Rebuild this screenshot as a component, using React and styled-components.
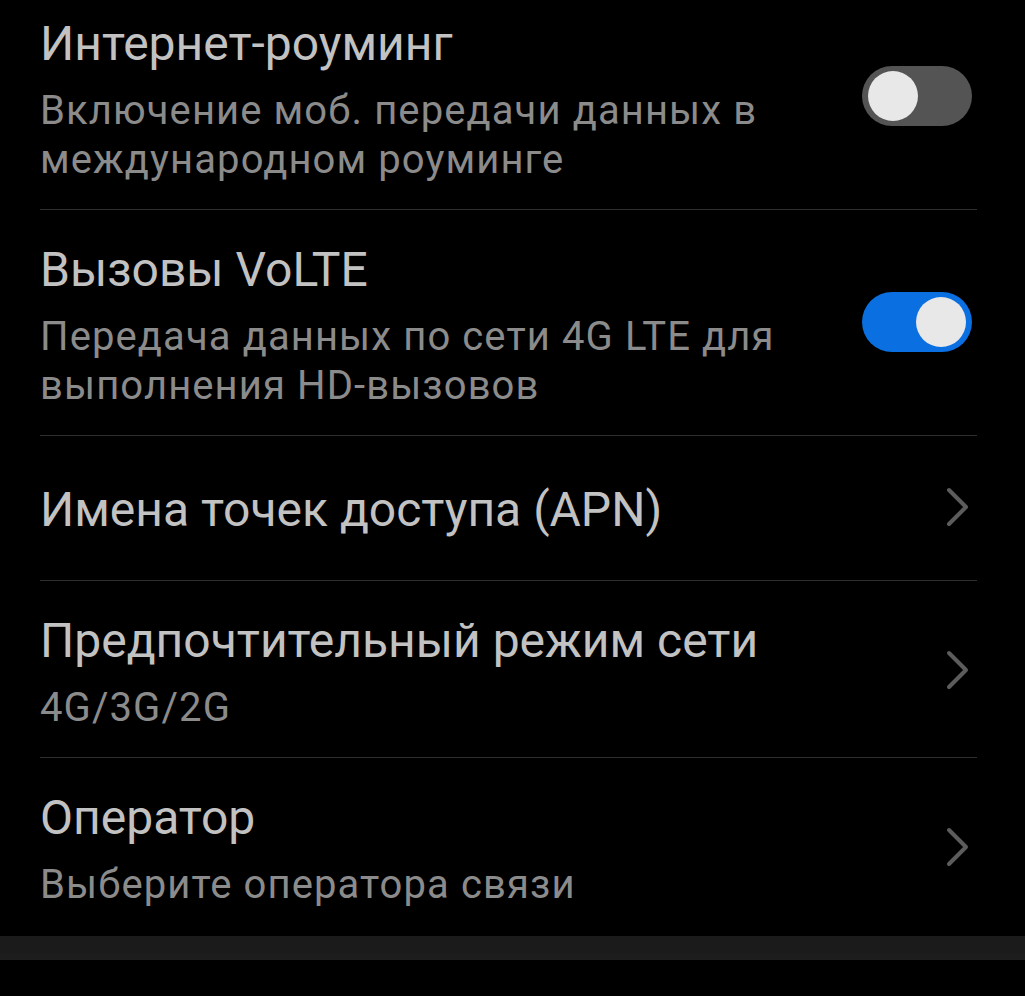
import React from 'react';
import styled, { createGlobalStyle } from 'styled-components';

const GlobalStyle = createGlobalStyle`
  html, body {
    margin: 0;
    padding: 0;
    background: #000;
  }
  body {
    font-family: Roboto, 'Noto Sans', sans-serif;
    -webkit-font-smoothing: antialiased;
  }
`;

const settings = [
  {
    title: 'Интернет-роуминг',
    subtitle: ['Включение моб. передачи данных в', 'международном роуминге'],
    control: 'toggle',
    on: false,
  },
  {
    title: 'Вызовы VoLTE',
    subtitle: ['Передача данных по сети 4G LTE для', 'выполнения HD-вызовов'],
    control: 'toggle',
    on: true,
  },
  { title: 'Имена точек доступа (APN)', control: 'chevron' },
  { title: 'Предпочтительный режим сети', subtitle: ['4G/3G/2G'], control: 'chevron' },
  { title: 'Оператор', subtitle: ['Выберите оператора связи'], control: 'chevron', last: true },
];

function Chevron() {
  return (
    <ChevronIcon width='26' height='40' viewBox='0 0 26 40'>
      <path d='M4 3 L21 20 L4 37' fill='none' stroke='#5c5c5c' strokeWidth='4' strokeLinecap='round' strokeLinejoin='round' />
    </ChevronIcon>
  );
}

function SettingRow({ item }) {
  const single = !item.subtitle;
  return (
    <Row $single={single} $last={item.last}>
      <TextBlock>
        <Title>{item.title}</Title>
        {item.subtitle && (
          <Subtitle>
            {item.subtitle.map((line) => (
              <span key={line}>{line}</span>
            ))}
          </Subtitle>
        )}
      </TextBlock>
      {item.control === 'toggle' ? (
        <Switch $on={item.on}>
          <Thumb />
        </Switch>
      ) : (
        <Chevron />
      )}
    </Row>
  );
}

export default function App() {
  return (
    <>
      <GlobalStyle />
      <Screen>
        <List>
          {settings.map((item) => (
            <SettingRow key={item.title} item={item} />
          ))}
        </List>
        <Footer />
      </Screen>
    </>
  );
}

const Screen = styled.div`
  width: 1025px;
  height: 996px;
  overflow: hidden;
  background: #000;
`;

// list is scrolled slightly, the first row's top is cut off
const List = styled.div`
  margin-top: -16px;
  padding: 0 48px 0 40px;
`;

const Row = styled.div`
  display: flex;
  align-items: center;
  justify-content: space-between;
  padding: ${(p) => (p.$single ? '46px 0 42px' : '32px 0 25px')};
  border-bottom: ${(p) => (p.$last ? 'none' : '1px solid #2e2e2e')};
`;

const TextBlock = styled.div`
  display: flex;
  flex-direction: column;
  gap: 14px;
`;

const Title = styled.div`
  font-size: 48px;
  line-height: 56px;
  color: #c2c2c2;
  white-space: nowrap;
`;

const Subtitle = styled.div`
  display: flex;
  flex-direction: column;
  font-size: 40px;
  line-height: 49px;
  letter-spacing: 1.1px;
  color: #8b8b8b;
  white-space: nowrap;
`;

const Switch = styled.div`
  flex: none;
  display: flex;
  align-items: center;
  justify-content: ${(p) => (p.$on ? 'flex-end' : 'flex-start')};
  box-sizing: border-box;
  width: 110px;
  height: 60px;
  padding: 0 6px;
  margin: 0 5px 8px 0;
  border-radius: 30px;
  background: ${(p) => (p.$on ? '#0a6fe0' : '#545454')};
`;

const Thumb = styled.div`
  width: 50px;
  height: 50px;
  border-radius: 50%;
  background: #e8e8e8;
`;

const ChevronIcon = styled.svg`
  flex: none;
  margin: 0 6px 6px 0;
`;

const Footer = styled.div`
  height: 24px;
  margin-top: 2px;
  background: #1b1b1b;
  box-shadow: inset 0 -6px 0 #1d1d1d, inset 0 -5px 0 #222;
`;
